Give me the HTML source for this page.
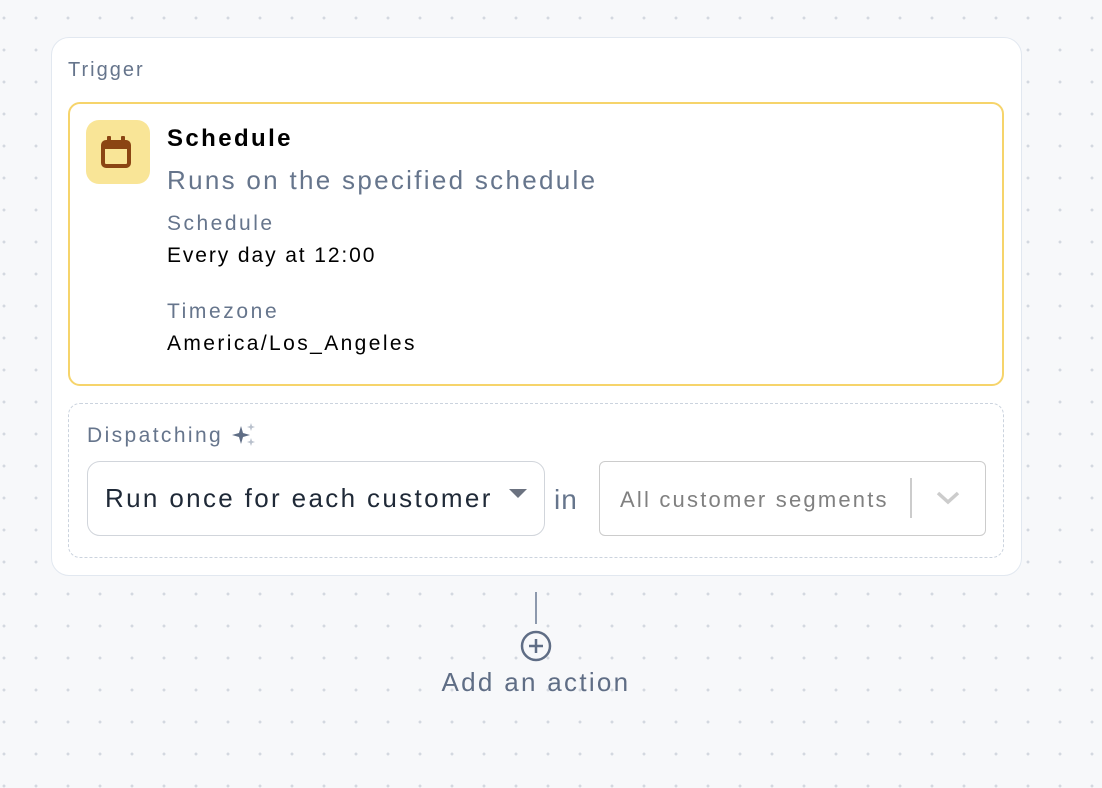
<!DOCTYPE html>
<html><head><meta charset="utf-8"><style>
*{box-sizing:border-box;margin:0;padding:0}
body{width:1102px;height:788px;overflow:hidden;background-color:#f7f8fa;background-image:radial-gradient(circle,#d3d8e0 1.3px,transparent 1.6px);background-size:32px 32px;background-position:-12px 2px;font-family:"Liberation Sans",sans-serif;position:relative}
.a{position:absolute;white-space:nowrap}
.outer{left:51px;top:37px;width:971px;height:539px;background:#fff;border:1.5px solid #e2e8f0;border-radius:18px}
.lbl{color:#66758c}
</style></head><body>
<div class="a outer"></div>
<div class="a lbl" style="left:68px;top:59px;font-size:20px;letter-spacing:2px">Trigger</div>
<div class="a" style="left:68px;top:102px;width:936px;height:284px;border:2px solid #f6d46b;border-radius:12px"></div>
<div class="a" style="left:86px;top:120px;width:64px;height:64px;background:#f9e597;border-radius:13px">
<svg width="64" height="64" viewBox="0 0 64 64"><rect x="17" y="22" width="26" height="24" rx="3" fill="none" stroke="#8b4513" stroke-width="4"/><rect x="17" y="22" width="26" height="7" fill="#8b4513"/><rect x="21" y="16" width="4" height="7" rx="1" fill="#8b4513"/><rect x="35" y="16" width="4" height="7" rx="1" fill="#8b4513"/></svg></div>
<div class="a" style="left:167px;top:125px;font-size:24px;font-weight:bold;color:#000;letter-spacing:2.4px">Schedule</div>
<div class="a lbl" style="left:167px;top:165px;font-size:26px;letter-spacing:2.3px">Runs on the specified schedule</div>
<div class="a lbl" style="left:167px;top:212px;font-size:21px;letter-spacing:2.5px">Schedule</div>
<div class="a" style="left:167px;top:244px;font-size:21px;color:#000;letter-spacing:1.9px">Every day at 12:00</div>
<div class="a lbl" style="left:167px;top:300px;font-size:21px;letter-spacing:2.6px">Timezone</div>
<div class="a" style="left:167px;top:332px;font-size:21px;color:#000;letter-spacing:2.4px">America/Los_Angeles</div>
<div class="a" style="left:68px;top:403px;width:936px;height:155px;border:1.5px dashed #cbd3de;border-radius:12px"></div>
<div class="a lbl" style="left:87px;top:424px;font-size:21px;letter-spacing:2.4px">Dispatching</div>
<svg class="a" style="left:230px;top:422px" width="28" height="26" viewBox="0 0 28 26"><path d="M11 4 L13 11 L20 13 L13 15 L11 22 L9 15 L2 13 L9 11Z" fill="#5f6d85"/><path d="M21 1 L22 4 L25 5 L22 6 L21 9 L20 6 L17 5 L20 4Z" fill="#b8c0cc"/><path d="M21 16 L22 19 L25 20 L22 21 L21 24 L20 21 L17 20 L20 19Z" fill="#b8c0cc"/></svg>
<div class="a" style="left:87px;top:461px;width:458px;height:75px;border:1.5px solid #d1d5db;border-radius:13px;background:#fff"></div>
<div class="a" style="left:105px;top:483px;font-size:26px;color:#1f2937;letter-spacing:2.35px">Run once for each customer</div>
<svg class="a" style="left:509px;top:488px" width="18" height="12"><path d="M0 1 L18 1 L9 10Z" fill="#6b7280"/></svg>
<div class="a lbl" style="left:554px;top:484px;font-size:28px;letter-spacing:1px">in</div>
<div class="a" style="left:599px;top:461px;width:387px;height:75px;border:1.5px solid #cccccc;border-radius:6px;background:#fff"></div>
<div class="a" style="left:620px;top:487px;font-size:22px;color:#808080;letter-spacing:2.2px">All customer segments</div>
<div class="a" style="left:910px;top:478px;width:1.5px;height:40px;background:#cccccc"></div>
<svg class="a" style="left:935px;top:490px" width="26" height="16"><path d="M3 3 L13 12 L23 3" fill="none" stroke="#cccccc" stroke-width="3.5"/></svg>
<div class="a" style="left:535px;top:592px;width:2px;height:32px;background:#8d99ad"></div>
<svg class="a" style="left:519px;top:629px" width="34" height="34"><circle cx="17" cy="17" r="14" fill="none" stroke="#5f6d85" stroke-width="2.5"/><path d="M17 10V24M10 17H24" stroke="#5f6d85" stroke-width="2.5"/></svg>
<div class="a lbl" style="left:336px;width:400px;text-align:center;top:667px;font-size:26px;color:#5f6d85;letter-spacing:2.3px">Add an action</div>
</body></html>
